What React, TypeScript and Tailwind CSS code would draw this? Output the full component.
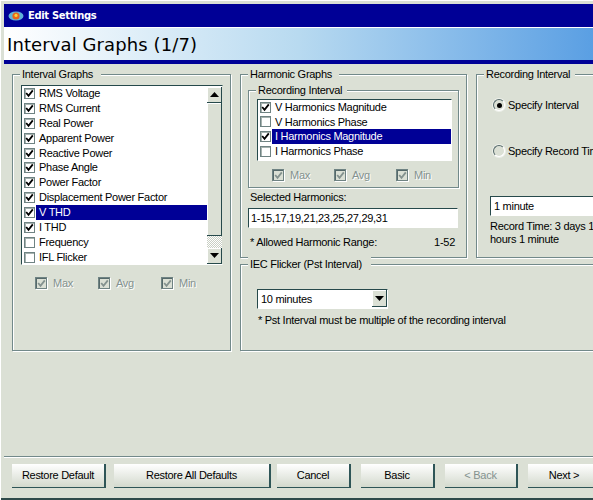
import type { ReactNode } from 'react';

const sans = "font-['Liberation_Sans',Arial,sans-serif]";

function Check({ checked, disabled }: { checked?: boolean; disabled?: boolean }) {
  return (
    <span
      className={`flex shrink-0 items-center justify-center border border-[#6f8383] ${
        disabled
          ? 'w-[12px] h-[12px] bg-[#dbe0d5] shadow-[inset_1px_1px_0_#55696a,1px_1px_0_#fff]'
          : 'w-[11px] h-[11px] bg-white shadow-[inset_1px_1px_0_#a7b3b0]'
      }`}
    >
      {checked && (
        <svg width="9" height="9" viewBox="0 0 9 9">
          <path d="M1.2 4 L3.5 6.8 L7.8 1.4" fill="none" stroke={disabled ? '#84928f' : '#000'} strokeWidth="1.8" />
        </svg>
      )}
    </span>
  );
}

function Group({ title, gap, className, children }: { title: string; gap: string; className: string; children: ReactNode }) {
  return (
    <div className={`relative border border-[#72898a] shadow-[1px_1px_0_#fff,inset_1px_1px_0_#fff] ${className}`}>
      <div className={`absolute left-[7px] -top-[8px] h-[15px] leading-[15px] bg-[#dbe0d5] pl-[2px] text-black whitespace-nowrap ${gap}`}>
        {title}
      </div>
      {children}
    </div>
  );
}

function Row({ label, checked, selected, rowH }: { label: string; checked?: boolean; selected?: boolean; rowH: string }) {
  return (
    <div className={`flex items-center ${rowH}`}>
      <span className="w-[14px] pl-[2px] shrink-0">
        <Check checked={checked} />
      </span>
      <span className={`flex-1 h-full pl-[3px] leading-[15px] whitespace-nowrap ${selected ? 'bg-[#000096] text-white' : 'text-black'}`}>
        {label}
      </span>
    </div>
  );
}

function Disabled({ label, className }: { label: string; className: string }) {
  return (
    <div className={`flex items-center gap-[6px] ${className}`}>
      <Check checked disabled />
      <span className="text-[#84928f] [text-shadow:1px_1px_0_#fff]">{label}</span>
    </div>
  );
}

function Radio({ checked }: { checked?: boolean }) {
  return (
    <span className="flex w-[12px] h-[12px] rounded-full items-center justify-center bg-[#dbe0d5] border border-t-[#55696a] border-l-[#55696a] border-r-white border-b-white shadow-[0_0_0_1px_#eef0ea]">
      {checked && <span className="w-[5px] h-[5px] rounded-full bg-black" />}
    </span>
  );
}

function Arrow({ up }: { up?: boolean }) {
  return (
    <svg width="9" height="5" viewBox="0 0 9 5">
      <path d={up ? 'M4.5 0 L9 5 L0 5 Z' : 'M0 0 L9 0 L4.5 5 Z'} fill="#000" />
    </svg>
  );
}

function ScrollBtn({ up }: { up?: boolean }) {
  return (
    <div className="flex items-center justify-center h-[16px] bg-[#dbe0d5] border-r border-b border-[#26494b] shadow-[inset_1px_1px_0_#fff]">
      <Arrow up={up} />
    </div>
  );
}

function Button({ label, className, disabled }: { label: string; className: string; disabled?: boolean }) {
  return (
    <button
      className={`h-[24px] shrink-0 bg-gradient-to-b from-white to-[#d3d9cd] border-r-2 border-b border-[#2e5557] ${
        disabled ? 'text-[#84928f]' : 'text-black'
      } ${className}`}
    >
      {label}
    </button>
  );
}

const intervalRows: [string, boolean][] = [
  ['RMS Voltage', true],
  ['RMS Current', true],
  ['Real Power', true],
  ['Apparent Power', true],
  ['Reactive Power', true],
  ['Phase Angle', true],
  ['Power Factor', true],
  ['Displacement Power Factor', true],
  ['V THD', true],
  ['I THD', true],
  ['Frequency', false],
  ['IFL Flicker', false],
];

const harmonicRows: [string, boolean][] = [
  ['V Harmonics Magnitude', true],
  ['V Harmonics Phase', false],
  ['I Harmonics Magnitude', true],
  ['I Harmonics Phase', false],
];

export default function App() {
  return (
    <div className={`w-[593px] h-[500px] overflow-hidden bg-[#dbe0d5] pt-[4px] pl-[4px] shadow-[inset_1px_1px_0_#fff,inset_0_-2px_0_#2e4a4a] ${sans} text-[11px] tracking-[-0.28px] text-black`}>
      <div className="flex items-center gap-[4px] h-[23px] bg-[#000096] pl-[4px] font-['DejaVu_Sans',sans-serif] font-bold text-[10px] tracking-[-0.35px] text-white">
        <svg width="16" height="10" viewBox="0 0 16 10">
          <ellipse cx="8" cy="5" rx="7.5" ry="4.5" fill="#5fb4d8" />
          <ellipse cx="8" cy="5" rx="3.6" ry="3.6" fill="#e8641a" />
          <circle cx="8" cy="4.4" r="1.6" fill="#f7d23c" />
        </svg>
        Edit Settings
      </div>
      <div className="flex items-center h-[33px] pl-[3px] border-t border-white bg-gradient-to-r from-white via-[#b8daf0] via-50% to-[#5a9fe3] font-['DejaVu_Sans',sans-serif] text-[18px] tracking-[0.1px] text-black">
        Interval Graphs (1/7)
      </div>
      <div className="h-[4px] bg-[#000096]" />

      <div className="flex items-start gap-[9px] pl-[8px] pt-[10px] w-[760px]">
        <Group title="Interval Graphs" gap="pr-[8px]" className="w-[219px] h-[277px] pt-[10px] pl-[8px]">
          <div className="flex w-[202px] h-[180px] bg-white border border-[#26494b] border-r-[#dbe0d5] border-b-white">
            <div className="w-[185px]">
              {intervalRows.map(([label, checked], i) => (
                <Row key={label} label={label} checked={checked} selected={i === 8} rowH="h-[14.9px]" />
              ))}
            </div>
            <div className="flex flex-col w-[15px] pt-[1px]">
              <ScrollBtn up />
              <div className="h-[135px] bg-[#dbe0d5] border-r border-b border-[#26494b] shadow-[inset_1px_1px_0_#fff]" />
              <div className="h-[12px] bg-[repeating-conic-gradient(#fff_0_25%,#c9cfc4_0_50%)] bg-[length:2px_2px]" />
              <ScrollBtn />
            </div>
          </div>
          <div className="flex pl-[14px] pt-[10px]">
            <Disabled label="Max" className="w-[63px]" />
            <Disabled label="Avg" className="w-[63px]" />
            <Disabled label="Min" className="w-[63px]" />
          </div>
        </Group>

        <div className="flex flex-col gap-[6px] shrink-0">
          <div className="flex gap-[9px]">
            <Group title="Harmonic Graphs" gap="pr-[7px]" className="w-[227px] h-[184px] pt-[15px] pl-[7px]">
              <Group title="Recording Interval" gap="pr-[5px]" className="w-[211px] h-[98px] pt-[8px] pl-[8px]">
                <div className="w-[195px] h-[62px] bg-white border border-[#26494b] border-r-white border-b-white">
                  {harmonicRows.map(([label, checked], i) => (
                    <Row key={label} label={label} checked={checked} selected={i === 2} rowH="h-[14.6px]" />
                  ))}
                </div>
                <div className="flex pl-[15px] pt-[6px]">
                  <Disabled label="Max" className="w-[63px]" />
                  <Disabled label="Avg" className="w-[63px]" />
                  <Disabled label="Min" className="w-[63px]" />
                </div>
              </Group>
              <div className="pl-[2px] pt-[2px] leading-[14px]">Selected Harmonics:</div>
              <div className="w-[210px] h-[20px] mt-[4px] pl-[2px] leading-[18px] bg-white border border-[#26494b] border-r-white border-b-white whitespace-nowrap">
                1-15,17,19,21,23,25,27,29,31
              </div>
              <div className="flex justify-between w-[207px] pl-[2px] pt-[7px] leading-[14px]">
                <span>* Allowed Harmonic Range:</span>
                <span>1-52</span>
              </div>
            </Group>

            <Group title="Recording Interval" gap="pr-[5px]" className="w-[150px] h-[184px] pl-[16px] pt-[23px]">
              <div className="flex items-center gap-[3px] h-[14px]">
                <Radio checked />
                <span className="whitespace-nowrap">Specify Interval</span>
              </div>
              <div className="flex items-center gap-[3px] h-[14px] mt-[32px]">
                <Radio />
                <span className="whitespace-nowrap">Specify Record Time</span>
              </div>
              <div className="w-[140px] h-[20px] -ml-[3px] mt-[38px] pl-[3px] leading-[18px] bg-white border border-[#26494b] border-r-white border-b-white">
                1 minute
              </div>
              <div className="-ml-[3px] pt-[4px] leading-[13px] w-[118px]">Record Time: 3 days 1 hours 1 minute</div>
            </Group>
          </div>

          <Group title="IEC Flicker (Pst Interval)" gap="pr-[9px]" className="w-[400px] h-[87px] pl-[16px] pt-[24px]">
            <div className="flex w-[131px] h-[20px] bg-white border border-[#26494b] border-r-white border-b-white">
              <span className="flex-1 pl-[3px] leading-[18px]">10 minutes</span>
              <div className="flex items-center justify-center w-[15px] h-[17px] bg-[#dbe0d5] border-r border-b border-[#26494b] shadow-[inset_1px_1px_0_#fff]">
                <Arrow />
              </div>
            </div>
            <div className="pl-[1px] pt-[4px] leading-[14px] whitespace-nowrap">* Pst Interval must be multiple of the recording interval</div>
          </Group>
        </div>
      </div>

      <div className="mt-[105px] h-[2px] border-t border-[#72898a] bg-white" />
      <div className="flex pl-[8px] pt-[6px] w-[700px]">
        <Button label="Restore Default" className="w-[94px]" />
        <Button label="Restore All Defaults" className="w-[157px] ml-[8px]" />
        <Button label="Cancel" className="w-[74px] ml-[6px]" />
        <Button label="Basic" className="w-[74px] ml-[10px]" />
        <Button label="< Back" disabled className="w-[73px] ml-[10px]" />
        <Button label="Next >" className="w-[74px] ml-[10px]" />
      </div>
    </div>
  );
}
